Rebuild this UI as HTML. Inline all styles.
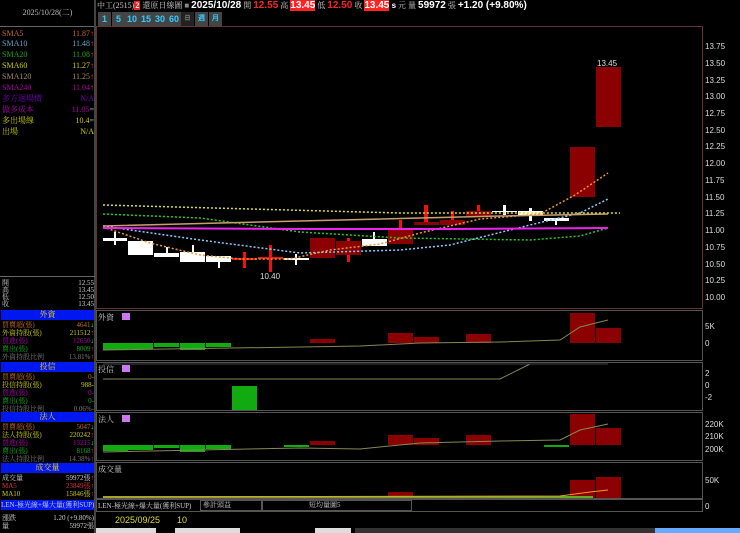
<!DOCTYPE html>
<html><head><meta charset="utf-8">
<style>
*{margin:0;padding:0;box-sizing:border-box}
body{width:740px;height:533px;background:#000;overflow:hidden;position:relative;font-family:"Liberation Serif","Noto Serif CJK SC","Noto Sans CJK TC",serif;font-size:9px;color:#ccc}
.a{position:absolute;white-space:nowrap}
.row{position:absolute;left:2px;width:92px;height:9px;font-size:8px;line-height:9px;overflow:hidden}
.row span{position:absolute;right:0;top:0}
.s7 .row,.row.s7{font-size:7px;line-height:8px;height:8px}
.hdr{position:absolute;left:1px;width:93px;height:10px;background:#0018f0;color:#ffd800;text-align:center;font-size:8px;line-height:10px}
.sans{font-family:"Liberation Sans","Noto Sans CJK TC",sans-serif}
.ax{position:absolute;left:705px;font-family:"Liberation Sans",sans-serif;font-size:8px;color:#ddd}
.tb{position:absolute;top:12px;height:14px;width:13px;background:#444;color:#3cf;font-family:"Liberation Sans",sans-serif;font-size:9px;font-weight:bold;text-align:center;line-height:14px}
</style></head><body>
<div class="a" style="left:0;top:0;width:95px;height:27px;border-bottom:1px solid #666;color:#bbb;text-align:center;line-height:26px;font-size:8px">2025/10/28(二)</div>
<div class="a" style="left:94px;top:0;width:2px;height:533px;background:#444"></div>
<div class="row" style="top:29px;color:#c76a2a">SMA5<span>11.87<b style="color:#f22">↑</b></span></div>
<div class="row" style="top:39px;color:#5ac">SMA10<span>11.48<b style="color:#f22">↑</b></span></div>
<div class="row" style="top:50px;color:#1a1">SMA20<span>11.08<b style="color:#f22">↑</b></span></div>
<div class="row" style="top:61px;color:#cc0">SMA60<span>11.27<b style="color:#f22">↑</b></span></div>
<div class="row" style="top:72px;color:#a88a60">SMA120<span>11.25<b style="color:#f22">↑</b></span></div>
<div class="row" style="top:83px;color:#a0a">SMA240<span>11.04<b style="color:#f22">↑</b></span></div>
<div class="row" style="top:94px;color:#70b">多方迴場價<span>N/A</span></div>
<div class="row" style="top:105px;color:#a0a">做多成本<span>11.05<b style="color:#888">=</b></span></div>
<div class="row" style="top:116px;color:#cc0">多出場線<span>10.4<b style="color:#888">=</b></span></div>
<div class="row" style="top:127px;color:#cc0">出場<span>N/A</span></div>
<div class="a" style="left:0;top:276px;width:95px;height:1px;background:#666"></div>
<div class="s7">
<div class="row" style="top:279px">開<span>12.55</span></div>
<div class="row" style="top:286px">高<span>13.45</span></div>
<div class="row" style="top:293px">低<span>12.50</span></div>
<div class="row" style="top:300px">收<span>13.45</span></div>
<div class="hdr" style="top:310px">外資</div>
<div class="row" style="top:321px;color:#c76a2a">買賣超(張)<span>4641<b style="color:#2f2">↓</b></span></div>
<div class="row" style="top:329px;color:#cc0">外資持股(張)<span>211512<b style="color:#f22">↑</b></span></div>
<div class="row" style="top:337px;color:#a0a">買進(張)<span>12650<b style="color:#2f2">↓</b></span></div>
<div class="row" style="top:345px;color:#1a1">賣出(張)<span>8009<b style="color:#f22">↑</b></span></div>
<div class="row" style="top:353px;color:#777">外資持股比例<span>13.81%<b style="color:#f22">↑</b></span></div>
<div class="hdr" style="top:362px">投信</div>
<div class="row" style="top:373px;color:#c76a2a">買賣超(張)<span>0-</span></div>
<div class="row" style="top:381px;color:#cc0">投信持股(張)<span>988-</span></div>
<div class="row" style="top:389px;color:#a0a">買進(張)<span>0-</span></div>
<div class="row" style="top:397px;color:#1a1">賣出(張)<span>0-</span></div>
<div class="row" style="top:405px;color:#777">投信持股比例<span>0.06%-</span></div>
<div class="hdr" style="top:412px">法人</div>
<div class="row" style="top:423px;color:#c76a2a">買賣超(張)<span>5047<b style="color:#2f2">↓</b></span></div>
<div class="row" style="top:431px;color:#cc0">法人持股(張)<span>220242<b style="color:#f22">↑</b></span></div>
<div class="row" style="top:439px;color:#a0a">買進(張)<span>13215<b style="color:#2f2">↓</b></span></div>
<div class="row" style="top:447px;color:#1a1">賣出(張)<span>8168<b style="color:#f22">↑</b></span></div>
<div class="row" style="top:455px;color:#777">法人持股比例<span>14.38%<b style="color:#f22">↑</b></span></div>
<div class="hdr" style="top:463px">成交量</div>
<div class="row" style="top:474px;color:#ccc">成交量<span>59972張<b style="color:#f22">↑</b></span></div>
<div class="row" style="top:482px;color:#d33">MA5<span>23849張<b style="color:#f22">↑</b></span></div>
<div class="row" style="top:490px;color:#cc0">MA10<span>15846張<b style="color:#f22">↑</b></span></div>
<div class="a" style="left:1px;top:500px;width:93px;height:10px;background:#0018f0;color:#ccc;font-size:7px;line-height:10px;overflow:hidden">LEN-極光線+爆大量(獲利SUP)</div>
<div class="row" style="top:514px">漲跌<span>1.20 (+9.80%)</span></div>
<div class="row" style="top:522px">量<span>59972張</span></div>
</div>

<div class="a" style="left:97px;top:0;font-size:8px;color:#ccc;line-height:11px">中工(2515)<b style="background:#e22;color:#fff;padding:0 1px">2</b> 還原日線圖 <b style="color:#888">■</b> <b class="sans" style="color:#fff;font-size:10px">2025/10/28</b> 開 <b class="sans" style="color:#f22;font-size:10px">12.55</b> 高 <b class="sans" style="background:#f22;color:#fff;font-size:10px">13.45</b> 低 <b class="sans" style="color:#f22;font-size:10px">12.50</b> 收 <b class="sans" style="background:#f22;color:#fff;font-size:10px">13.45</b><b class="sans" style="color:#fff"> s</b> 元 量 <b class="sans" style="color:#fff;font-size:10px">59972</b> 張 <b class="sans" style="color:#fff;font-size:10px">+1.20 (+9.80%)</b></div>
<div class="tb" style="left:98px">1</div><div class="tb" style="left:112px">5</div><div class="tb" style="left:125px;width:14px">10</div><div class="tb" style="left:139px;width:14px">15</div><div class="tb" style="left:153px;width:14px">30</div><div class="tb" style="left:167px;width:14px">60</div><div class="tb" style="left:181px;background:#222;color:#888;font-size:6px">日</div><div class="tb" style="left:195px;font-size:7px;color:#3cf">週</div><div class="tb" style="left:209px;font-size:7px">月</div>

<svg class="a" style="left:0;top:0" width="740" height="533">
<g fill="none" stroke="#555">
<rect x="96.5" y="26.5" width="606" height="282" stroke="#633"/>
<rect x="96.5" y="310.5" width="606" height="50"/>
<rect x="96.5" y="362.5" width="606" height="48"/>
<rect x="96.5" y="412.5" width="606" height="48"/>
<rect x="96.5" y="462.5" width="606" height="36"/>
<rect x="96.5" y="499.5" width="606" height="12"/>
</g>
<g fill="#fff">
<rect x="114" y="232" width="2" height="13"/><rect x="103" y="238" width="24" height="3"/>
<rect x="128" y="241" width="25" height="14"/>
<rect x="166" y="247" width="2" height="8"/><rect x="154" y="253" width="25" height="4"/>
<rect x="192" y="245" width="2" height="8"/><rect x="180" y="252" width="25" height="10"/>
<rect x="218" y="256" width="2" height="12"/><rect x="206" y="256" width="25" height="6"/>
<rect x="295" y="254" width="2" height="11"/><rect x="284" y="258" width="25" height="2"/>
<rect x="373" y="232" width="2" height="8"/><rect x="362" y="239" width="25" height="7"/>
<rect x="503" y="205" width="3" height="10"/><rect x="492" y="211" width="25" height="1"/>
<rect x="529" y="208" width="3" height="13"/><rect x="518" y="211" width="25" height="5"/>
<rect x="555" y="218" width="2" height="7"/><rect x="544" y="218" width="25" height="3"/>
</g>
<g fill="#e11">
<rect x="243" y="252" width="3" height="16"/><rect x="232" y="258" width="25" height="2"/>
<rect x="269" y="245" width="3" height="27"/><rect x="258" y="257" width="25" height="2"/>
<rect x="424" y="205" width="4" height="17"/><rect x="451" y="211" width="3" height="10"/><rect x="477" y="205" width="3" height="8"/>
<rect x="399" y="220" width="3" height="10"/><rect x="347" y="238" width="3" height="24"/>
</g>
<g fill="#8b0000">
<rect x="310" y="238" width="25" height="20"/>
<rect x="336" y="241" width="25" height="14"/>
<rect x="388" y="229" width="25" height="15"/>
<rect x="414" y="222" width="25" height="3"/>
<rect x="440" y="220" width="25" height="5"/>
<rect x="466" y="211" width="25" height="5"/>
<rect x="570" y="147" width="25" height="50"/>
<rect x="596" y="67" width="25" height="60"/>
</g>
<g fill="none" stroke-width="1.5">
<polyline stroke="#dd3" stroke-dasharray="2,2" points="103,205 250,209 400,213 620,213"/>
<polyline stroke="#2c2" stroke-dasharray="2,2" points="103,214 200,218 300,232 400,238 530,240 580,236 608,228"/>
<polyline stroke="#8cf" stroke-dasharray="2,2" points="103,226 200,240 300,253 400,250 450,245 530,225 580,213 608,199"/>
<polyline stroke="#e93" stroke-dasharray="2,2" points="103,227 150,243 200,255 240,259 290,259 330,250 380,244 420,233 480,219 540,214 575,195 608,173"/>
<polyline stroke="#c8a070" points="103,226 300,221 500,216 608,214"/>
<polyline stroke="#e2e" stroke-width="2" points="103,228 300,229 450,229 608,228"/>
</g>
<g font-family="Liberation Sans" font-size="8" fill="#ddd">
<text x="260" y="279">10.40</text><text x="597" y="66">13.45</text>
</g>
<g fill="#1a1"><rect x="103" y="343" width="25" height="7"/><rect x="128" y="343" width="25" height="6"/><rect x="154" y="343" width="25" height="4"/><rect x="180" y="343" width="25" height="7"/><rect x="206" y="343" width="25" height="4"/>
<rect x="232" y="386" width="25" height="24"/>
<rect x="103" y="445" width="25" height="6"/><rect x="128" y="445" width="25" height="5"/><rect x="154" y="445" width="25" height="3"/><rect x="180" y="445" width="25" height="7"/><rect x="206" y="445" width="25" height="4"/><rect x="284" y="445" width="25" height="2"/><rect x="544" y="445" width="25" height="2"/></g>
<g fill="#8b0000"><rect x="310" y="339" width="25" height="4"/><rect x="388" y="333" width="25" height="10"/><rect x="414" y="337" width="25" height="6"/><rect x="466" y="334" width="25" height="9"/><rect x="570" y="313" width="25" height="30"/><rect x="596" y="328" width="25" height="15"/>
<rect x="310" y="441" width="25" height="4"/><rect x="388" y="435" width="25" height="10"/><rect x="414" y="438" width="25" height="7"/><rect x="466" y="435" width="25" height="10"/><rect x="570" y="414" width="25" height="31"/><rect x="596" y="428" width="25" height="17"/>
<rect x="388" y="492" width="25" height="6"/><rect x="570" y="480" width="25" height="18"/><rect x="596" y="477" width="25" height="21"/></g>
<g fill="#6a2"><rect x="103" y="496" width="490" height="2"/></g>
<g fill="none" stroke="#885" stroke-width="1">
<polyline points="103,350 300,347 360,346 420,343 500,342 560,340 580,327 608,320"/>
<polyline points="103,379 500,379 530,364 608,364"/><line x1="103" y1="364" x2="608" y2="364" stroke="#444"/>
<polyline points="103,452 300,448 360,449 420,443 500,441 560,440 580,430 608,424"/>
<polyline points="103,497 560,496 590,492 608,490" stroke="#e93"/>
</g>
<g fill="#c7e"><rect x="122" y="313" width="8" height="7"/><rect x="122" y="365" width="8" height="7"/><rect x="122" y="415" width="8" height="7"/></g>
</svg>
<div class="a" style="left:98px;top:312px;font-size:8px">外資</div>
<div class="a" style="left:98px;top:364px;font-size:8px">投信</div>
<div class="a" style="left:98px;top:414px;font-size:8px">法人</div>
<div class="a" style="left:98px;top:464px;font-size:8px">成交量</div>
<div class="ax" style="top:42px">13.75</div><div class="ax" style="top:59px">13.50</div><div class="ax" style="top:76px">13.25</div><div class="ax" style="top:92px">13.00</div><div class="ax" style="top:109px">12.75</div><div class="ax" style="top:126px">12.50</div><div class="ax" style="top:142px">12.25</div><div class="ax" style="top:159px">12.00</div><div class="ax" style="top:176px">11.75</div><div class="ax" style="top:193px">11.50</div><div class="ax" style="top:209px">11.25</div><div class="ax" style="top:226px">11.00</div><div class="ax" style="top:243px">10.75</div><div class="ax" style="top:260px">10.50</div><div class="ax" style="top:276px">10.25</div><div class="ax" style="top:293px">10.00</div>
<div class="ax" style="top:322px">5K</div><div class="ax" style="top:339px">0</div>
<div class="ax" style="top:369px">2</div><div class="ax" style="top:381px">0</div><div class="ax" style="top:393px">-2</div>
<div class="ax" style="top:420px">220K</div><div class="ax" style="top:432px">210K</div><div class="ax" style="top:445px">200K</div>
<div class="ax" style="top:476px">50K</div><div class="ax" style="top:502px">0</div>
<div class="a" style="left:98px;top:501px;font-size:7px;color:#ccc;width:100px;overflow:hidden">LEN-極光線+爆大量(獲利SUP)</div>
<div class="a" style="left:200px;top:500px;width:62px;height:11px;border:1px solid #555;font-size:7px;padding-left:2px;line-height:9px">參計頭益</div>
<div class="a" style="left:262px;top:500px;width:150px;height:11px;border:1px solid #555;font-size:7px;padding-left:4px;line-height:9px">　　　　　　短均量圖5</div>
<div class="a sans" style="left:115px;top:515px;font-size:9px;color:#dd3">2025/09/25</div>
<div class="a sans" style="left:177px;top:515px;font-size:9px;color:#dd3">10</div>
<div class="a" style="left:96px;top:528px;width:60px;height:5px;background:#ddd"></div>
<div class="a" style="left:175px;top:528px;width:65px;height:5px;background:#ddd"></div>
<div class="a" style="left:315px;top:528px;width:36px;height:5px;background:#ddd"></div>
<div class="a" style="left:355px;top:528px;width:300px;height:5px;background:#333"></div>
<div class="a" style="left:655px;top:528px;width:85px;height:5px;background:#6af"></div>
</body></html>
